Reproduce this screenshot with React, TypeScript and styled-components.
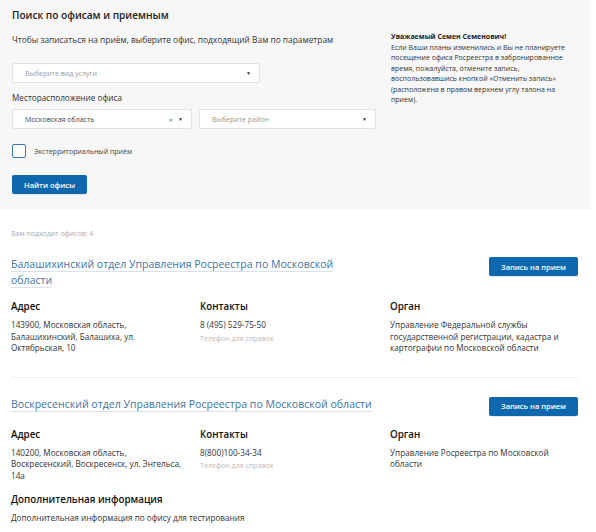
import styled, { createGlobalStyle } from "styled-components";

const GlobalStyle = createGlobalStyle`
  html, body {
    margin: 0;
    padding: 0;
    background: #fff;
    font-family: "Open Sans", "Noto Sans", sans-serif;
    color: #222;
  }
  * { box-sizing: border-box; }
`;

const Page = styled.div`
  width: 596px;
`;

const SearchPanel = styled.section`
  background: #f7f7f7;
  width: 590px;
  padding: 7px 12px 16px 12px;
  display: flex;
  gap: 14px;
`;

const SearchForm = styled.div`
  width: 365px;
  display: flex;
  flex-direction: column;
`;

const Title = styled.h1`
  margin: 0;
  font-size: 10.1px;
  font-weight: 600;
  line-height: 16px;
  color: #222;
`;

const Lead = styled.p`
  margin: 11px 0 0;
  font-size: 8.4px;
  line-height: 12px;
  color: #333;
`;

const Select = styled.div<{ $width: number; $placeholder?: boolean }>`
  width: ${(p) => p.$width}px;
  height: 20px;
  background: #fff;
  border: 1px solid #e2e2e2;
  border-radius: 2px;
  display: flex;
  align-items: center;
  padding: 0 8px 0 12px;
  font-size: 7px;
  color: ${(p) => (p.$placeholder ? "#9a9a9a" : "#444")};
  span:first-child { flex: 1; }
`;

const ServiceSelect = styled(Select)`
  margin-top: 17px;
`;

const Caret = styled.span`
  font-size: 5px;
  color: #333;
`;

const Clear = styled.span`
  font-size: 8px;
  color: #777;
  margin-right: 5px;
`;

const FieldLabel = styled.div`
  margin-top: 9px;
  font-size: 8.2px;
  line-height: 12px;
  color: #333;
`;

const SelectRow = styled.div`
  display: flex;
  gap: 7px;
  margin-top: 5px;
`;

const CheckRow = styled.label`
  display: flex;
  align-items: center;
  gap: 8px;
  margin-top: 15px;
  font-size: 7px;
  color: #444;
`;

const CheckBox = styled.span`
  width: 14px;
  height: 14px;
  background: #fff;
  border: 1px solid #3b78b0;
  border-radius: 2px;
`;

const Button = styled.button`
  background: #0f68ae;
  color: #fff;
  border: none;
  border-radius: 2px;
  font-family: inherit;
  font-size: 7.5px;
  font-weight: 600;
  height: 19px;
  padding: 0 12px;
  cursor: pointer;
  box-shadow: 0 1px 0 rgba(0, 0, 0, 0.08);
`;

const FindButton = styled(Button)`
  align-self: flex-start;
  margin-top: 17px;
`;

const Notice = styled.aside`
  width: 180px;
  padding-top: 25px;
  font-size: 7px;
  line-height: 10.5px;
  color: #333;
  b { font-weight: 700; color: #222; }
`;

const Results = styled.section`
  padding: 19px 18px 0 11px;
`;

const Count = styled.div`
  font-size: 7px;
  color: #aaa;
  line-height: 10px;
`;

const Office = styled.article<{ $last?: boolean }>`
  padding: ${(p) => (p.$last ? "18px 0 0" : "17px 0 23px")};
  border-bottom: ${(p) => (p.$last ? "none" : "1px solid #eee")};
`;

const OfficeHead = styled.div`
  display: flex;
  justify-content: space-between;
  align-items: flex-start;
`;

const OfficeName = styled.a`
  width: 363px;
  font-size: 10.55px;
  line-height: 16px;
  color: #3f73a3;
  text-decoration: none;
  span {
    border-bottom: 1px solid #d6e3ef;
  }
`;

const BookButton = styled(Button)`
  width: 89px;
  padding: 0;
  margin-top: 1px;
`;

const InfoGrid = styled.div`
  display: grid;
  grid-template-columns: 189px 190px 1fr;
  margin-top: 12px;
`;

const Heading = styled.h3`
  margin: 0 0 6px;
  font-size: 9.8px;
  font-weight: 600;
  line-height: 13px;
  color: #111;
`;

const Text = styled.div<{ $wide?: boolean }>`
  font-size: 8.2px;
  line-height: 11.5px;
  color: #333;
  max-width: ${(p) => (p.$wide ? "none" : "172px")};
`;

const Hint = styled.div`
  margin-top: 2px;
  font-size: 7.1px;
  line-height: 10px;
  color: #bbb;
`;

const Extra = styled.div`
  margin-top: 12px;
`;

type OfficeData = {
  name: string;
  address: string;
  phone: string;
  organ: string;
  extra?: string;
};

const offices: OfficeData[] = [
  {
    name: "Балашихинский отдел Управления Росреестра по Московской области",
    address: "143900, Московская область, Балашихинский, Балашиха, ул. Октябрьская, 10",
    phone: "8 (495) 529-75-50",
    organ:
      "Управление Федеральной службы государственной регистрации, кадастра и картографии по Московской области",
  },
  {
    name: "Воскресенский отдел Управления Росреестра по Московской области",
    address: "140200, Московская область, Воскресенский, Воскресенск, ул. Энгельса, 14а",
    phone: "8(800)100-34-34",
    organ: "Управление Росреестра по Московской области",
    extra: "Дополнительная информация по офису для тестирования",
  },
];

function OfficeCard({ office, last }: { office: OfficeData; last?: boolean }) {
  return (
    <Office $last={last}>
      <OfficeHead>
        <OfficeName href="#">
          <span>{office.name}</span>
        </OfficeName>
        <BookButton>Запись на прием</BookButton>
      </OfficeHead>
      <InfoGrid>
        <div>
          <Heading>Адрес</Heading>
          <Text>{office.address}</Text>
        </div>
        <div>
          <Heading>Контакты</Heading>
          <Text>{office.phone}</Text>
          <Hint>Телефон для справок</Hint>
        </div>
        <div>
          <Heading>Орган</Heading>
          <Text>{office.organ}</Text>
        </div>
      </InfoGrid>
      {office.extra && (
        <Extra>
          <Heading>Дополнительная информация</Heading>
          <Text $wide>{office.extra}</Text>
        </Extra>
      )}
    </Office>
  );
}

export default function App() {
  return (
    <Page>
      <GlobalStyle />
      <SearchPanel>
        <SearchForm>
          <Title>Поиск по офисам и приемным</Title>
          <Lead>Чтобы записаться на приём, выберите офис, подходящий Вам по параметрам</Lead>
          <ServiceSelect $width={248} $placeholder>
            <span>Выберите вид услуги</span>
            <Caret>▼</Caret>
          </ServiceSelect>
          <FieldLabel>Месторасположение офиса</FieldLabel>
          <SelectRow>
            <Select $width={180}>
              <span>Московская область</span>
              <Clear>×</Clear>
              <Caret>▼</Caret>
            </Select>
            <Select $width={177} $placeholder>
              <span>Выберите район</span>
              <Caret>▼</Caret>
            </Select>
          </SelectRow>
          <CheckRow>
            <CheckBox />
            Экстерриториальный приём
          </CheckRow>
          <FindButton>Найти офисы</FindButton>
        </SearchForm>
        <Notice>
          <b>Уважаемый Семен Семенович!</b>
          <br />
          Если Ваши планы изменились и Вы не планируете посещение офиса Росреестра в
          забронированное время, пожалуйста, отмените запись, воспользовавшись кнопкой
          «Отменить запись» (расположена в правом верхнем углу талона на прием).
        </Notice>
      </SearchPanel>
      <Results>
        <Count>Вам подходит офисов: 4</Count>
        {offices.map((o, i) => (
          <OfficeCard key={o.name} office={o} last={i === offices.length - 1} />
        ))}
      </Results>
    </Page>
  );
}
